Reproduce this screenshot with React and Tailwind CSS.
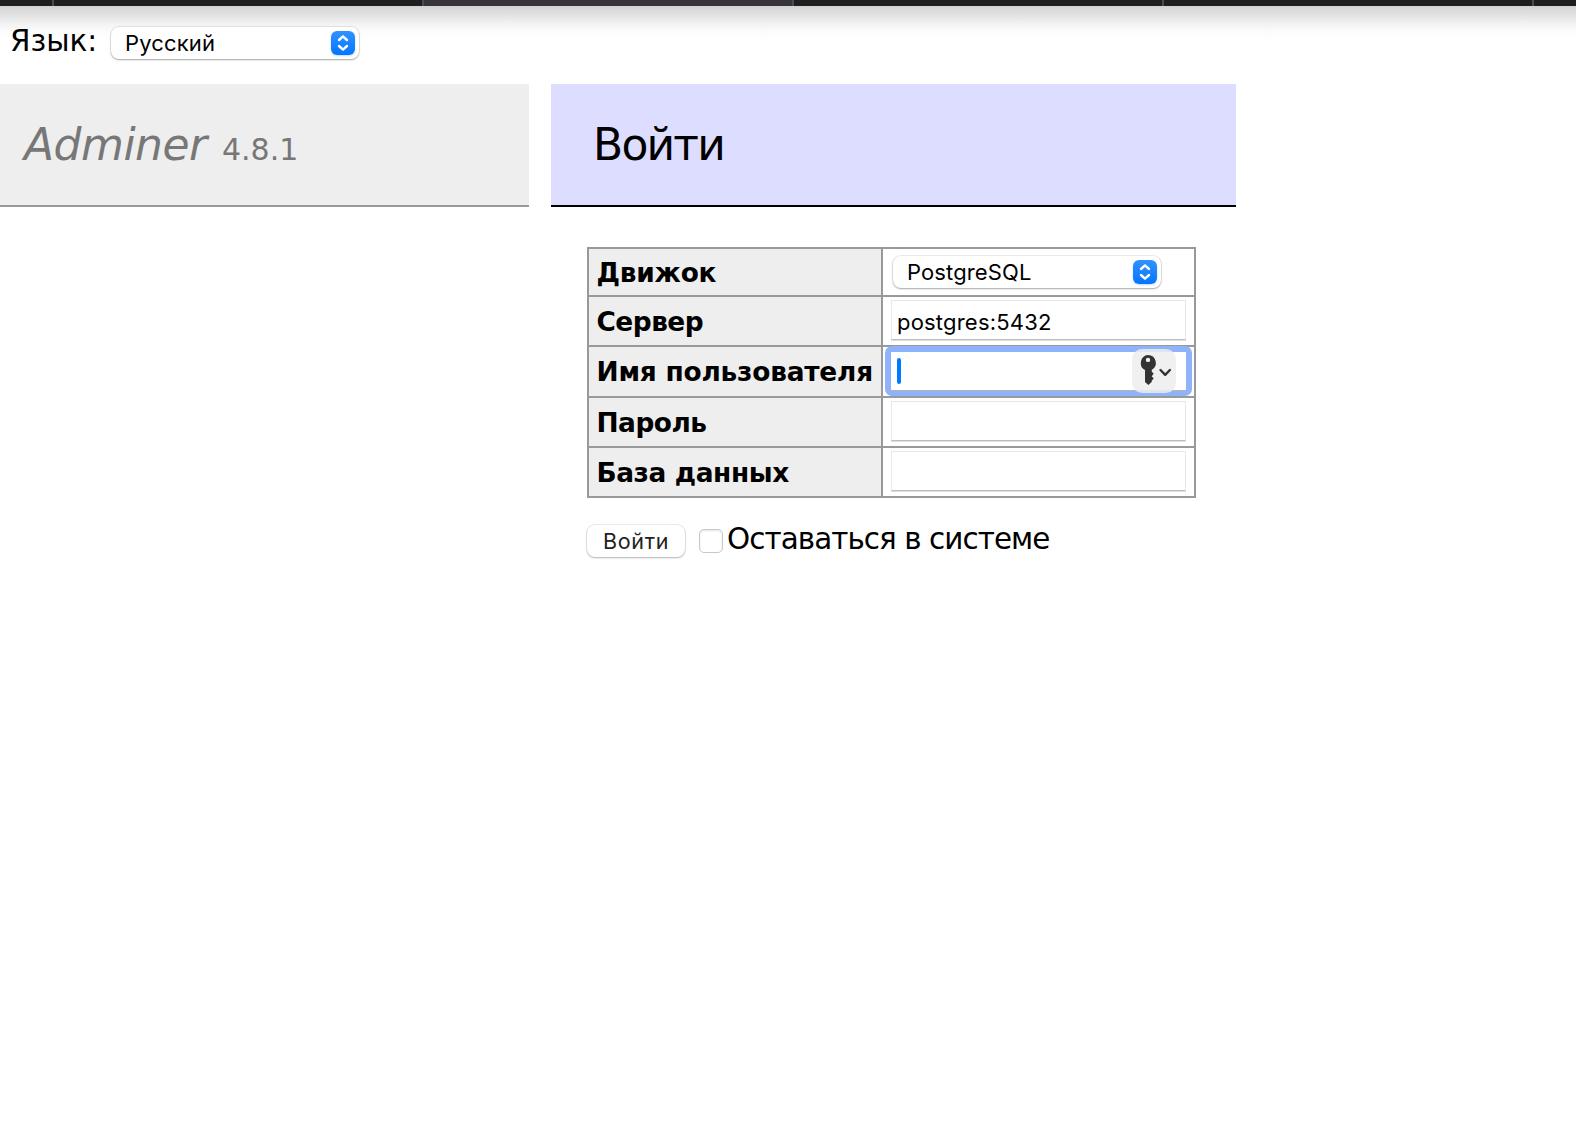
const VERDANA = "font-['DejaVu_Sans',Verdana,sans-serif]";

function Stepper() {
  return (
    <span className="flex h-6 w-6 shrink-0 items-center justify-center rounded-[6px] bg-gradient-to-b from-[#2f92ff] to-[#0075ff] shadow-[0_1px_2px_rgba(0,100,255,0.25)]">
      <svg width="24" height="24" viewBox="0 0 24 24" fill="none" stroke="#fff" strokeWidth="2.4" strokeLinecap="round" strokeLinejoin="round">
        <path d="M8 9 12 5.4 16 9M8 15 12 18.6 16 15" />
      </svg>
    </span>
  );
}

function Select({ className, children }) {
  return (
    <div className={`flex h-8 items-center justify-between rounded-[8px] bg-white pr-1 pl-[14px] shadow-[0_0_0_1px_rgba(0,0,0,0.07),0_1px_2px_rgba(0,0,0,0.3)] ${className}`}>
      {children}
      <Stepper />
    </div>
  );
}

function Field({ children }) {
  return (
    <div className="flex h-10 w-[295px] items-center border border-[#e8e8e8] border-b-[#bdbdbd] bg-white pt-[3px] pl-[5px] shadow-[0_1px_0_#dedede]">
      {children}
    </div>
  );
}

function Row({ label, height, tracking, children }) {
  return (
    <div className={`flex border-b-2 border-[#999] last:border-b-0 ${height}`}>
      <div className="flex w-[292px] shrink-0 items-center bg-[#eee] pt-[2px] pl-[7.5px]">
        <span className={`text-[26.4px] leading-none font-bold whitespace-nowrap ${tracking}`}>{label}</span>
      </div>
      <div className="flex-1 border-l-2 border-[#999]">{children}</div>
    </div>
  );
}

function PasswordKey() {
  return (
    <div className="absolute top-[3px] left-[247px] flex h-11 w-11 rounded-[10px] bg-[#ededed]/85">
      <svg width="44" height="44" viewBox="0 0 44 44" fill="none">
        <path fill="#333" fillRule="evenodd" d="M16 6a8 8 0 0 1 3.7 15v1.6l2 2.2-2 2.4 2 2.4-2 2.2v1.2L16.3 36l-3.3-3V21A8 8 0 0 1 16 6Zm0 2.7a2.2 2.2 0 1 0 0 4.4 2.2 2.2 0 0 0 0-4.4Z" />
        <path stroke="#333" strokeWidth="2.4" strokeLinecap="round" strokeLinejoin="round" d="m28.5 21 4.7 4.8 4.7-4.8" />
      </svg>
    </div>
  );
}

export default function App() {
  return (
    <div className={`h-[1124px] w-[1576px] overflow-hidden bg-white text-black ${VERDANA}`}>
      <div className="flex h-[6px] bg-[#1e1d20]">
        <div className="w-[54px] border-r-2 border-[#4b4a4c]" />
        <div className="w-[370px] border-r-2 border-[#4b4a4c]" />
        <div className="w-[370px] border-r-2 border-[#4b4a4c] bg-[#373338]" />
        <div className="w-[370px] border-r-2 border-[#4b4a4c]" />
        <div className="w-[370px] border-r-2 border-[#4b4a4c]" />
      </div>
      <div className="h-[78px] bg-[linear-gradient(to_bottom,#d2d2d2_0px,#e2e2e2_9px,#f3f3f3_18px,#fcfcfc_26px,#fff_34px)]">
        <div className="flex pt-[20px] pl-[10px]">
          <span className="w-[101px] text-[29.5px] leading-[30px]">Язык:</span>
          <Select className="mt-px w-[248px]">
            <span className="font-[Inter,sans-serif] text-[22px] leading-none tracking-[0.15px]">Русский</span>
          </Select>
        </div>
      </div>

      <div className="flex gap-[22px]">
        <h1 className="flex h-[123px] w-[529px] items-baseline border-b-2 border-[#999] bg-[#eee] pt-[35px] pl-6 leading-[52px] text-[#777]">
          <span className="w-[198px] text-[44px] tracking-[-0.5px] italic">Adminer</span>
          <span className="text-[30px]">4.8.1</span>
        </h1>
        <main className="w-[685px]">
          <h2 className="h-[123px] border-b-2 border-black bg-[#ddf] pt-[35px] pl-[42px] text-[44px] leading-[52px] tracking-[-1.8px]">Войти</h2>

          <div className="mt-10 ml-9 w-[609px] border-2 border-[#999]">
            <Row label="Движок" height="h-[48px]" tracking="tracking-[-0.2px]">
              <Select className="mt-[7px] ml-[10px] w-[268px]">
                <span className="font-[Inter,sans-serif] text-[22px] leading-none tracking-[0.12px]">PostgreSQL</span>
              </Select>
            </Row>
            <Row label="Сервер" height="h-[50px]" tracking="tracking-[-0.5px]">
              <div className="pt-[3px] pl-2">
                <Field>
                  <span className="font-[Inter,sans-serif] text-[22px] leading-none tracking-[0.2px]">postgres:5432</span>
                </Field>
              </div>
            </Row>
            <Row label="Имя пользователя" height="h-[51px]" tracking="tracking-[-0.2px]">
              <div className="relative -mt-px ml-[2px] h-[50px] w-[307px] rounded-[7px] bg-[#8eb3fb] pt-[6px] pl-[6px]">
                <div className="flex h-[39px] w-[295px] items-center border-b border-[#b4b4b4] bg-white pl-[6px]">
                  <div className="h-[26px] w-1 rounded-full bg-[#007aff]" />
                </div>
                <PasswordKey />
              </div>
            </Row>
            <Row label="Пароль" height="h-[50px]" tracking="tracking-[-0.5px]">
              <div className="pt-[3px] pl-2">
                <Field />
              </div>
            </Row>
            <Row label="База данных" height="h-[48px]" tracking="tracking-[-0.4px]">
              <div className="pt-[3px] pl-2">
                <Field />
              </div>
            </Row>
          </div>

          <div className="mt-[27px] ml-9 flex items-start">
            <button className="h-8 w-[98px] rounded-[8px] bg-white pt-[2px] text-[21.5px] leading-none text-[#222] shadow-[0_0_0_1px_rgba(0,0,0,0.07),0_1px_2px_rgba(0,0,0,0.25)]">
              <span className="font-[Inter,sans-serif] tracking-[0.7px]">Войти</span>
            </button>
            <span className="mt-[4px] ml-[14px] h-6 w-6 rounded-[5px] border border-[#c8c8c8] bg-white shadow-[inset_0_1px_2px_rgba(0,0,0,0.1)]" />
            <span className="-mt-px ml-1 text-[29.4px] leading-[30px] tracking-[-0.92px] whitespace-nowrap">Оставаться в системе</span>
          </div>
        </main>
      </div>
    </div>
  );
}
